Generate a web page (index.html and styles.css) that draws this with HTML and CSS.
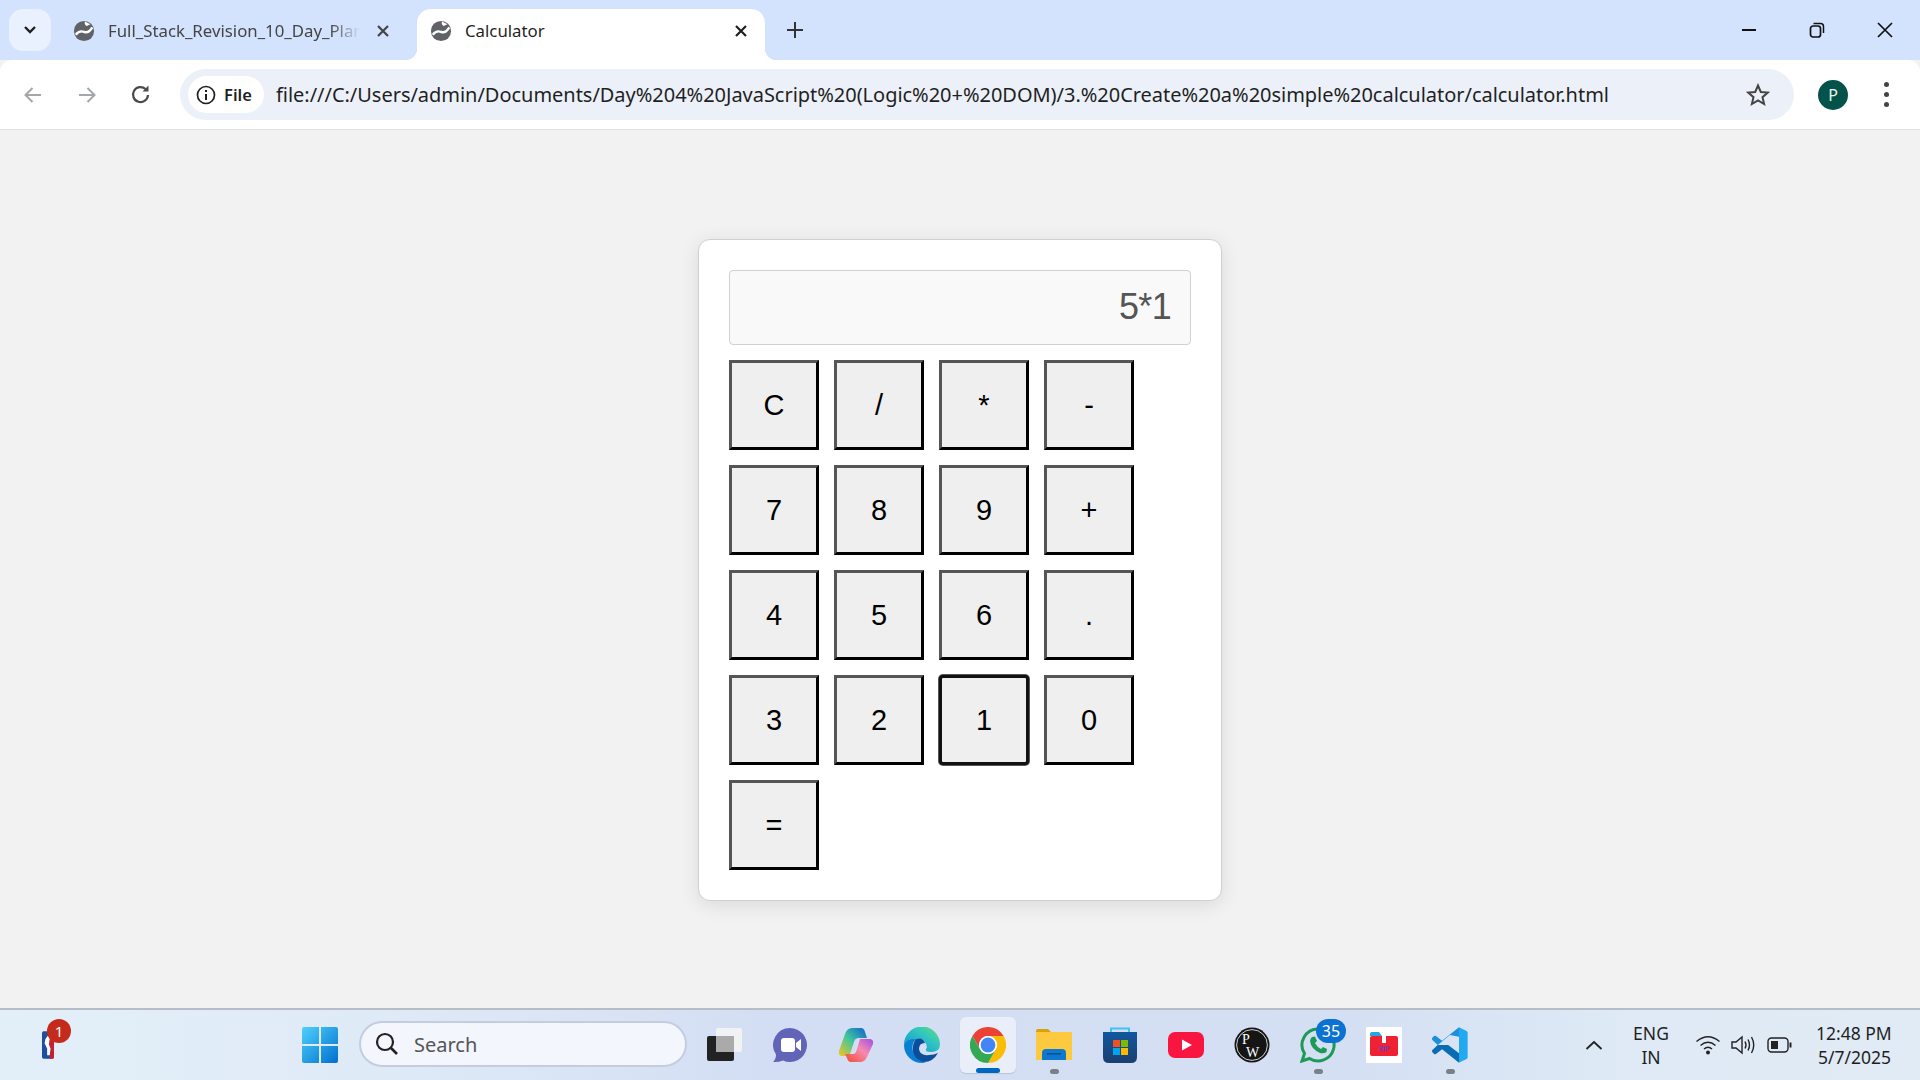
FILE: index.html
```html
<!DOCTYPE html>
<html lang="en">
<head>
    <meta charset="UTF-8">
    <meta name="viewport" content="width=device-width, initial-scale=1.0">
    <title>Calculator</title>
    <link rel="stylesheet" href="styles.css">
</head>
<body>

<svg class="defs" width="0" height="0">
    <symbol id="globe" viewBox="0 0 24 24">
        <circle cx="12" cy="12" r="11" fill="#5f6368"/>
        <path d="M3 16 Q7 11 12 13 Q17 15 21 8" fill="none" stroke="#fff" stroke-width="2.6"/>
        <path d="M13 1.5 Q12 5 15 6.5 L19 4.5Z" fill="#fff"/>
    </symbol>
</svg>

<!-- Tab strip -->
<header class="tabstrip">
    <button class="tab-search">
        <svg width="14" height="10" viewBox="0 0 14 10"><path d="M2 2 L7 7 L12 2" fill="none" stroke="#1f1f1f" stroke-width="2.4"/></svg>
    </button>
    <div class="tab">
        <svg class="favicon" width="22" height="22"><use href="#globe"/></svg>
        <span class="tab-title fade">Full_Stack_Revision_10_Day_Plan</span>
        <svg class="tab-close" width="14" height="14" viewBox="0 0 14 14"><path d="M2 2 L12 12 M12 2 L2 12" stroke="#444" stroke-width="2.2"/></svg>
    </div>
    <div class="tab active">
        <svg class="favicon" width="22" height="22"><use href="#globe"/></svg>
        <span class="tab-title">Calculator</span>
        <svg class="tab-close" width="14" height="14" viewBox="0 0 14 14"><path d="M2 2 L12 12 M12 2 L2 12" stroke="#1f1f1f" stroke-width="2.2"/></svg>
    </div>
    <svg class="new-tab" width="18" height="18" viewBox="0 0 18 18"><path d="M9 1 V17 M1 9 H17" stroke="#333" stroke-width="2"/></svg>
    <div class="window-controls">
        <svg width="16" height="16" viewBox="0 0 16 16"><path d="M1 8 H15" stroke="#111" stroke-width="2"/></svg>
        <svg width="16" height="16" viewBox="0 0 16 16"><rect x="1.5" y="4" width="10" height="11" rx="2.5" fill="none" stroke="#111" stroke-width="1.7"/><path d="M4.5 1.5 H11.5 Q14.5 1.5 14.5 4.5 V11" fill="none" stroke="#111" stroke-width="1.5"/></svg>
        <svg width="16" height="16" viewBox="0 0 16 16"><path d="M1 1 L15 15 M15 1 L1 15" stroke="#111" stroke-width="1.7"/></svg>
    </div>
</header>

<!-- Address bar -->
<nav class="toolbar">
    <svg class="nav-icon" width="20" height="20" viewBox="0 0 20 20"><path d="M18 10 H3 M9.5 3 L2.5 10 L9.5 17" fill="none" stroke="#a3a6aa" stroke-width="2"/></svg>
    <svg class="nav-icon" width="20" height="20" viewBox="0 0 20 20"><path d="M2 10 H17 M10.5 3 L17.5 10 L10.5 17" fill="none" stroke="#a3a6aa" stroke-width="2"/></svg>
    <svg class="nav-icon" width="22" height="22" viewBox="0 0 22 22"><path d="M18 11 A7.5 7.5 0 1 1 15.5 5" fill="none" stroke="#4a4a4a" stroke-width="2.2"/><path d="M12.5 7.5 H18.5 V1.5Z" fill="#4a4a4a"/></svg>
    <div class="omnibox">
        <div class="site-chip">
            <svg width="20" height="20" viewBox="0 0 20 20"><circle cx="10" cy="10" r="8.5" fill="none" stroke="#1f1f1f" stroke-width="1.7"/><path d="M10 9 V15 M10 5 V7" stroke="#1f1f1f" stroke-width="2"/></svg>
            <span>File</span>
        </div>
        <span class="url">file:///C:/Users/admin/Documents/Day%204%20JavaScript%20(Logic%20+%20DOM)/3.%20Create%20a%20simple%20calculator/calculator.html</span>
        <svg class="star" width="24" height="24" viewBox="0 0 24 24"><path d="M12 2.5 L14.8 9 L21.8 9.6 L16.5 14.2 L18.1 21 L12 17.4 L5.9 21 L7.5 14.2 L2.2 9.6 L9.2 9Z" fill="none" stroke="#444" stroke-width="2"/></svg>
    </div>
    <div class="avatar">P</div>
    <div class="kebab"><i></i><i></i><i></i></div>
</nav>

<!-- Page content -->
<main class="page">
    <div class="calculator">
        <div class="display">5*1</div>
        <div class="keys">
            <button>C</button>
            <button>/</button>
            <button>*</button>
            <button>-</button>
            <button>7</button>
            <button>8</button>
            <button>9</button>
            <button>+</button>
            <button>4</button>
            <button>5</button>
            <button>6</button>
            <button>.</button>
            <button>3</button>
            <button>2</button>
            <button class="focused">1</button>
            <button>0</button>
            <button>=</button>
        </div>
    </div>
</main>

<!-- Windows taskbar -->
<footer class="taskbar">
    <div class="widgets">
        <svg width="12" height="30" viewBox="0 0 14 32">
            <rect width="14" height="32" rx="2" fill="#1d4f9c"/>
            <path d="M8 0 H12 Q14 0 14 2 V30 Q14 32 12 32 H9 L10 20 L7 12Z" fill="#c8202f"/>
            <path d="M7 5 L9 9 L8 15 L10 20 L9 28 L6 28 L6 20 L3 14 L4 9Z" fill="#fff"/>
        </svg>
        <span class="notify">1</span>
    </div>
    <div class="slot">
        <svg width="36" height="36" viewBox="0 0 36 36">
            <defs><linearGradient id="winGrad" x1="0" y1="0" x2="1" y2="1"><stop offset="0" stop-color="#4fd0fb"/><stop offset="1" stop-color="#0070cf"/></linearGradient></defs>
            <path d="M0 2 Q0 0 2 0 H17 V17 H0Z M19 0 H34 Q36 0 36 2 V17 H19Z M0 19 H17 V36 H2 Q0 36 0 34Z M19 19 H36 V34 Q36 36 34 36 H19Z" fill="url(#winGrad)"/>
        </svg>
    </div>
    <div class="search-box">
        <svg width="24" height="24" viewBox="0 0 24 24"><circle cx="10" cy="10" r="8" fill="none" stroke="#222" stroke-width="2.2"/><path d="M15.5 15.5 L22 22" stroke="#222" stroke-width="2.6"/></svg>
        <span>Search</span>
    </div>
    <div class="apps">
        <div class="slot">
            <svg width="36" height="36" viewBox="0 0 36 36">
                <rect x="1" y="9" width="27" height="25" rx="2" fill="#222"/>
                <rect x="10" y="1" width="26" height="24" rx="2" fill="#f4f4f4" opacity=".9"/>
                <rect x="10" y="9" width="18" height="16" fill="#aaa"/>
            </svg>
        </div>
        <div class="slot">
            <svg width="36" height="36" viewBox="0 0 36 36">
                <path d="M18 1 A17 17 0 1 1 11 33.5 Q6 35.5 1 35 Q4 32 4 27.5 A17 17 0 0 1 18 1Z" fill="#6264b8"/>
                <rect x="9" y="11" width="14" height="14" rx="3" fill="#fff"/>
                <path d="M24 16 L29 12 V24 L24 20Z" fill="#fff"/>
            </svg>
        </div>
        <div class="slot">
            <svg width="36" height="36" viewBox="0 0 36 36">
                <defs>
                    <linearGradient id="copA" x1="0" y1="1" x2="1" y2="0"><stop offset="0" stop-color="#f2c81e"/><stop offset=".5" stop-color="#3fc4a0"/><stop offset="1" stop-color="#0f5fd0"/></linearGradient>
                    <linearGradient id="copB" x1="0" y1="1" x2="1" y2="0"><stop offset="0" stop-color="#f4482a"/><stop offset=".55" stop-color="#f78ab0"/><stop offset="1" stop-color="#a04ee6"/></linearGradient>
                </defs>
                <path d="M14 1 H23 Q26 1 27 5 L29 11 H21 Q17 11 16 15 L12 27 Q11 29 8 29 H4 Q0 29 1 24 L7 7 Q9 1 14 1Z" fill="url(#copA)"/>
                <path d="M22 35 H13 Q10 35 9 31 L7 27 H15 Q18 27 19 22 L22 12 H31 Q36 12 35 17 L29 30 Q27 35 22 35Z" fill="url(#copB)"/>
            </svg>
        </div>
        <div class="slot">
            <svg width="36" height="36" viewBox="0 0 36 36">
                <defs>
                    <linearGradient id="edgeTop" x1="0" y1="1" x2="1" y2="0"><stop offset="0" stop-color="#0c8fd6"/><stop offset=".6" stop-color="#31c5c0"/><stop offset="1" stop-color="#62e07a"/></linearGradient>
                </defs>
                <path d="M0 18 A18 18 0 0 1 36 17 Q36 25 27 25 Q21 25 22 22 Q24 20 21 15 Q18 11 12 12 Q2 14 0 18Z" fill="url(#edgeTop)"/>
                <path d="M0 18 Q3 11 12 12 Q7 17 9 25 Q12 33 22 35 Q20 36 18 36 A18 18 0 0 1 0 18Z" fill="#0a7fd2"/>
                <path d="M12 12 Q19 10 21 16 Q15 16 15 22 Q16 29 25 28 Q30 28 34 26 Q29 35 20 35 Q11 33 9 25 Q8 17 12 12Z" fill="#0b4f9c"/>
            </svg>
        </div>
        <div class="slot current">
            <svg width="36" height="36" viewBox="6 6 36 36">
                <path d="M8.4 15 A18 18 0 0 1 39.6 15 H24 A9 9 0 0 0 16.2 28.5Z" fill="#ea4335"/>
                <path d="M39.6 15 A18 18 0 0 1 24 42 L31.8 28.5 A9 9 0 0 0 24 15Z" fill="#fbbc04"/>
                <path d="M24 42 A18 18 0 0 1 8.4 15 L16.2 28.5 A9 9 0 0 0 31.8 28.5Z" fill="#34a853"/>
                <circle cx="24" cy="24" r="9" fill="#fff"/>
                <circle cx="24" cy="24" r="7.4" fill="#4285f4"/>
            </svg>
            <i class="running blue"></i>
        </div>
        <div class="slot">
            <svg width="36" height="36" viewBox="0 0 36 36">
                <path d="M0 4 Q0 2 2 2 H12 L15 5 H36 V12 H0Z" fill="#dba10a"/>
                <rect y="5" width="36" height="28" fill="#fdc93f"/>
                <path d="M6 33 V26 Q6 22 10 22 H26 Q30 22 30 26 V33Z" fill="#0d78cf"/>
                <rect x="11" y="26" width="14" height="1.6" fill="#06508f"/>
            </svg>
            <i class="running"></i>
        </div>
        <div class="slot">
            <svg width="36" height="36" viewBox="0 0 36 36">
                <defs><linearGradient id="storeGrad" x1="0" y1="0" x2="0" y2="1"><stop offset="0" stop-color="#10589f"/><stop offset="1" stop-color="#1b3f70"/></linearGradient></defs>
                <path d="M9 6 V1.5 H27 V6" fill="none" stroke="#3dc4f2" stroke-width="2"/>
                <path d="M1 5 H35 V30 Q35 36 29 36 H7 Q1 36 1 30Z" fill="url(#storeGrad)"/>
                <rect x="11" y="13" width="7" height="7" fill="#f25022"/>
                <rect x="19" y="13" width="7" height="7" fill="#7fba00"/>
                <rect x="11" y="21" width="7" height="7" fill="#00a4ef"/>
                <rect x="19" y="21" width="7" height="7" fill="#ffb900"/>
            </svg>
        </div>
        <div class="slot">
            <svg width="36" height="26" viewBox="0 0 36 26">
                <rect width="36" height="26" rx="7" fill="#f8153f"/>
                <path d="M14 7.5 L24 13 L14 18.5Z" fill="#fff"/>
            </svg>
        </div>
        <div class="slot">
            <svg width="36" height="36" viewBox="0 0 36 36">
                <circle cx="18" cy="18" r="17.5" fill="#151515"/>
                <circle cx="18" cy="18" r="15.4" fill="none" stroke="#fff" stroke-width=".8"/>
                <text class="pw" x="8" y="17" font-size="14">P</text>
                <text class="pw" x="12" y="30" font-size="14">W</text>
            </svg>
        </div>
        <div class="slot">
            <svg width="36" height="36" viewBox="0 0 36 36">
                <path d="M18 2 A16 16 0 1 1 9.5 31.5 L2 34 L4.5 26.5 A16 16 0 0 1 18 2Z" fill="none" stroke="#1e9a56" stroke-width="3"/>
                <path d="M12 10 L15 9.5 L17 14 L15 16 Q17 20 21 22 L23 20 L27 22 L26.5 25 Q24 27 20 26 Q11 22 10 14 Q10.5 11 12 10Z" fill="#1e9a56"/>
            </svg>
            <span class="count">35</span>
            <i class="running"></i>
        </div>
        <div class="slot">
            <svg width="36" height="36" viewBox="0 0 36 36">
                <rect width="36" height="36" fill="#fff"/>
                <path d="M4 7 Q4 5 6 5 H13 L16 9 H4Z" fill="#22a7e0"/>
                <rect x="4" y="9" width="28" height="20" rx="2" fill="#ee2233"/>
                <rect x="16" y="9" width="4" height="7" fill="#fff"/>
                <text class="zip" x="18" y="24" font-size="7" text-anchor="middle">ZIP</text>
            </svg>
        </div>
        <div class="slot">
            <svg width="36" height="36" viewBox="0 0 100 100">
                <path d="M75 1 L28 38 L11 25 Q8 23 6 25 L1 30 Q-1 33 1 36 L16 50 L50 22 L75 27Z" fill="#1a8fdc"/>
                <path d="M75 99 L28 62 L11 75 Q8 77 6 75 L1 70 Q-1 67 1 64 L16 50 L45 50 L75 73Z" fill="#0a6db4"/>
                <path d="M75 1 L96 11 Q99 12.5 99 16 V84 Q99 87.5 96 89 L75 99Z" fill="#23a8f2"/>
            </svg>
            <i class="running"></i>
        </div>
    </div>
    <div class="tray">
        <svg class="tray-chevron" width="18" height="10" viewBox="0 0 18 10"><path d="M1.5 9 L9 2 L16.5 9" fill="none" stroke="#222" stroke-width="1.8"/></svg>
        <div class="lang">ENG<br>IN</div>
        <svg class="tray-icon" width="26" height="20" viewBox="0 0 26 20"><path d="M1.5 6.5 Q13 -3 24.5 6.5 M5.5 10.5 Q13 4 20.5 10.5 M9 14 Q13 10.5 17 14" fill="none" stroke="#222" stroke-width="1.4"/><circle cx="13" cy="17.5" r="2" fill="#222"/></svg>
        <svg class="tray-icon" width="26" height="20" viewBox="0 0 26 20"><path d="M1 7 H5 L11 2 V18 L5 13 H1Z" fill="none" stroke="#222" stroke-width="1.4"/><path d="M14 6.5 Q16 10 14 13.5 M17 4.5 Q20 10 17 15.5 M20.5 2 Q25 10 20.5 18" fill="none" stroke="#222" stroke-width="1.4"/></svg>
        <svg class="tray-icon" width="26" height="20" viewBox="0 0 26 20"><rect x="1" y="3" width="20" height="14" rx="3.5" fill="none" stroke="#222" stroke-width="1.4"/><rect x="4" y="6" width="7" height="8" fill="#222"/><path d="M22.5 7.5 H24.5 V12.5 H22.5Z" fill="#222"/></svg>
        <div class="clock">12:48 PM<br>5/7/2025</div>
    </div>
</footer>

</body>
</html>
```

FILE: styles.css
```css
/* Page frame: browser on top, taskbar at the bottom */
body {
    margin: 0;
    height: 100vh;
    display: flex;
    flex-direction: column;
    overflow: hidden;
    font-family: "Noto Sans", "Open Sans", sans-serif;
    background-color: #f2f2f2;
}

.defs {
    position: absolute;
}

svg {
    display: block;
    flex: none;
}

/* Tab strip */
.tabstrip {
    height: 60px;
    flex: none;
    display: flex;
    align-items: flex-end;
    background-color: #d3e3fd;
}

.tab-search {
    width: 42px;
    height: 42px;
    margin: 0 0 9px 9px;
    padding: 0;
    display: flex;
    align-items: center;
    justify-content: center;
    border: none;
    border-radius: 14px;
    background-color: #e9f0fe;
}

.tab {
    width: 348px;
    height: 51px;
    flex: none;
    box-sizing: border-box;
    padding: 0 17px 8px 13px;
    display: flex;
    align-items: center;
    color: #444;
    font-size: 16.8px;
    border-radius: 14px 14px 0 0;
}

.tab:first-of-type {
    width: 366px;
}

.tab-search + .tab {
    padding-left: 22px;
    padding-right: 27px;
}

.favicon {
    margin-right: 13px;
}

.tab-close {
    margin-left: 16px;
}

.tab-title {
    flex: 1;
    overflow: hidden;
    white-space: nowrap;
}

.fade {
    -webkit-mask-image: linear-gradient(to right, #000 88%, transparent 100%);
    mask-image: linear-gradient(to right, #000 88%, transparent 100%);
}

.tab.active {
    position: relative;
    background-color: #ffffff;
    color: #1f1f1f;
    padding-left: 13px;
    padding-right: 17px;
}

.tab.active::before,
.tab.active::after {
    content: "";
    position: absolute;
    bottom: 0;
    width: 12px;
    height: 12px;
}

.tab.active::before {
    left: -12px;
    background: radial-gradient(circle at 0 0, transparent 12px, #fff 12.5px);
}

.tab.active::after {
    right: -12px;
    background: radial-gradient(circle at 100% 0, transparent 12px, #fff 12.5px);
}

.new-tab {
    margin: 0 0 21px 21px;
}

.window-controls {
    margin: 0 27px 22px auto;
    display: flex;
    gap: 52px;
}

/* Toolbar */
.toolbar {
    height: 69px;
    flex: none;
    display: flex;
    align-items: center;
    padding: 0 0 0 23px;
    background-color: #ffffff;
    border-bottom: 1px solid #e3e3e3;
    border-radius: 12px 12px 0 0;
}

.nav-icon {
    margin-right: 34px;
}

.nav-icon:nth-child(3) {
    margin-left: -1px;
    margin-right: 28px;
}

.omnibox {
    width: 1614px;
    height: 51px;
    flex: none;
    box-sizing: border-box;
    padding: 0 24px 0 8px;
    display: flex;
    align-items: center;
    background-color: #ecf1f9;
    border-radius: 26px;
}

.site-chip {
    height: 37px;
    width: 76px;
    box-sizing: border-box;
    padding-left: 8px;
    display: flex;
    align-items: center;
    gap: 8px;
    background-color: #ffffff;
    border-radius: 19px;
    font-size: 16.5px;
    font-weight: 600;
    color: #1f1f1f;
}

.url {
    flex: 1;
    margin-left: 12px;
    font-size: 20px;
    letter-spacing: -0.03px;
    color: #1f1f1f;
    white-space: nowrap;
}

.avatar {
    width: 30px;
    height: 30px;
    flex: none;
    margin-left: 24px;
    border-radius: 50%;
    background-color: #04534a;
    color: #e8f5f0;
    font-size: 16px;
    line-height: 30px;
    text-align: center;
}

.kebab {
    margin-left: 36px;
    display: flex;
    flex-direction: column;
    gap: 5px;
}

.kebab i {
    width: 5px;
    height: 5px;
    border-radius: 50%;
    background-color: #444;
}

/* Calculator */
.page {
    flex: 1;
    min-height: 0;
    display: flex;
    align-items: center;
    justify-content: center;
    padding-top: 2px;
}

.calculator {
    width: 524px;
    box-sizing: border-box;
    padding: 30px;
    background-color: #ffffff;
    border: 1px solid #d0d0d0;
    border-radius: 12px;
    box-shadow: 0 4px 20px rgba(0, 0, 0, 0.1);
}

.display {
    height: 75px;
    box-sizing: border-box;
    padding: 0 19px;
    margin-bottom: 15px;
    background-color: #f9f9f9;
    border: 1px solid #d0d0d0;
    border-radius: 4px;
    color: #555;
    font-family: "Liberation Sans", Arial, sans-serif;
    font-size: 36px;
    letter-spacing: -0.7px;
    line-height: 72px;
    text-align: right;
}

.keys {
    display: flex;
    flex-wrap: wrap;
    gap: 15px;
}

.keys button {
    width: 90px;
    height: 90px;
    padding: 0;
    font-family: "Liberation Sans", Arial, sans-serif;
    font-size: 29px;
    color: #000;
    background-color: #efefef;
    border: 3px solid;
    border-color: #555 #000 #000 #555;
}

.keys button.focused {
    border-color: #111;
    border-radius: 4px;
    box-shadow: 0 0 0 1px #555;
}

/* Taskbar */
.taskbar {
    height: 70px;
    flex: none;
    display: flex;
    align-items: center;
    border-top: 2px solid #b7bdc7;
    background: linear-gradient(to right, #e3eff8 0%, #dfeaf7 20%, #d3def4 40%, #d4dff3 70%, #dfeaf6 85%, #e0ebf5 100%);
}

.widgets {
    width: 287px;
    flex: none;
    height: 100%;
    padding-left: 42px;
    box-sizing: border-box;
    display: flex;
    align-items: center;
    position: relative;
}

.notify {
    position: absolute;
    left: 47px;
    top: 9px;
    width: 24px;
    height: 24px;
    border-radius: 50%;
    background-color: #c42b1c;
    color: #fff;
    font-size: 15px;
    line-height: 24px;
    text-align: center;
}

.slot {
    width: 66px;
    height: 56px;
    flex: none;
    display: flex;
    align-items: center;
    justify-content: center;
    position: relative;
    border-radius: 6px;
}

.search-box {
    width: 328px;
    height: 46px;
    flex: none;
    box-sizing: border-box;
    margin: -2px 4px 0 6px;
    padding-left: 14px;
    display: flex;
    align-items: center;
    gap: 15px;
    background-color: #f3f6fd;
    border: 2px solid #c4cde0;
    border-radius: 23px;
    color: #555;
    font-size: 20px;
}

.apps {
    display: flex;
    align-items: center;
}

.slot.current {
    width: 56px;
    margin: 0 5px;
    background-color: #e9eef9;
    box-shadow: 0 1px 1px rgba(0, 0, 0, 0.12);
}

.running {
    position: absolute;
    bottom: -1px;
    left: 50%;
    width: 9px;
    height: 5px;
    margin-left: -4.5px;
    border-radius: 3px;
    background-color: #7a8088;
}

.running.blue {
    bottom: 0;
    width: 24px;
    margin-left: -12px;
    background-color: #0067c0;
}

.count {
    position: absolute;
    top: 2px;
    left: 31px;
    width: 30px;
    height: 24px;
    border-radius: 12px;
    background-color: #0b72d1;
    color: #fff;
    font-size: 16px;
    line-height: 24px;
    text-align: center;
}

.pw {
    font-family: "Liberation Serif", serif;
    fill: #fff;
}

.zip {
    font-family: "Liberation Sans", sans-serif;
    font-weight: bold;
    fill: #6a3fc0;
}

/* System tray */
.tray {
    margin-left: auto;
    padding-right: 29px;
    display: flex;
    align-items: center;
    color: #1f1f1f;
    font-size: 17.5px;
    line-height: 24px;
}

.lang {
    margin-left: 23px;
    width: 50px;
    text-align: center;
}

.tray-icon {
    margin-left: 10px;
}

.lang + .tray-icon {
    margin-left: 19px;
}

.clock {
    margin-left: 23px;
    width: 75px;
    white-space: nowrap;
    text-align: right;
}
```
